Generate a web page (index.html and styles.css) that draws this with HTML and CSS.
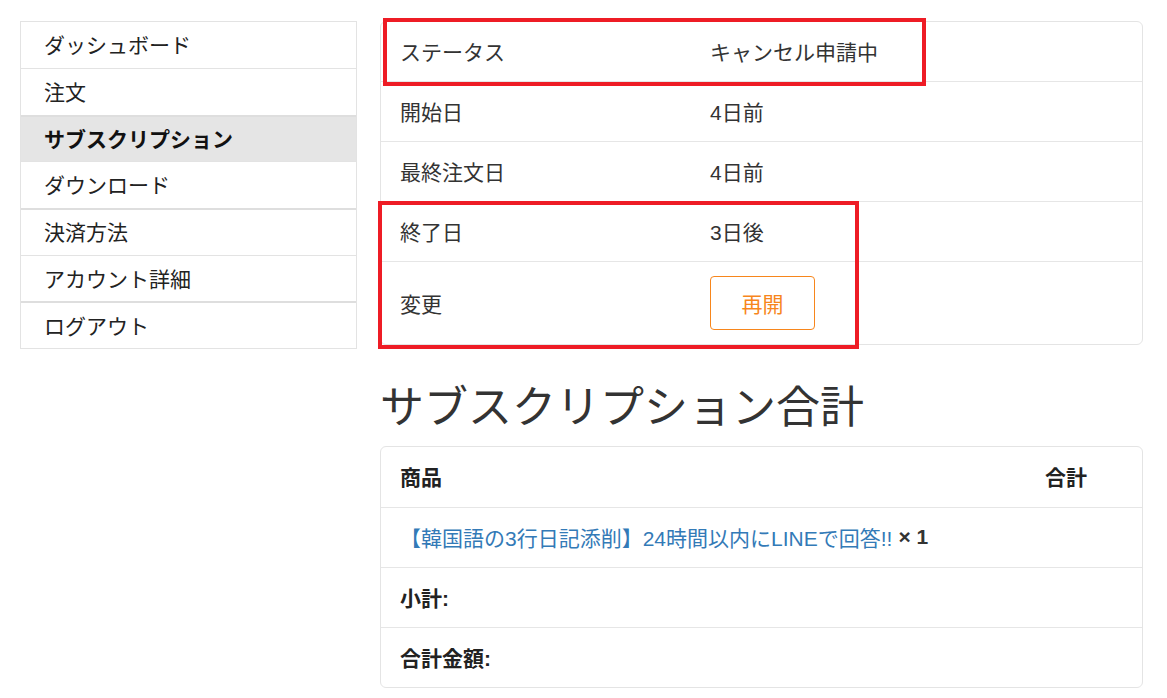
FILE: index.html
```html
<!DOCTYPE html>
<html lang="ja">
<head>
<meta charset="utf-8">
<title>サブスクリプション</title>
<link rel="stylesheet" href="styles.css">
</head>
<body>
<div class="page">
  <nav class="side">
    <a class="nav-item" href="#">ダッシュボード</a>
    <a class="nav-item" href="#">注文</a>
    <a class="nav-item thick active" href="#">サブスクリプション</a>
    <a class="nav-item" href="#">ダウンロード</a>
    <a class="nav-item thick" href="#">決済方法</a>
    <a class="nav-item" href="#">アカウント詳細</a>
    <a class="nav-item thick" href="#">ログアウト</a>
  </nav>
  <main class="main">
    <div class="panel info">
      <div class="row"><div class="cell">ステータス</div><div class="cell">キャンセル申請中</div></div>
      <div class="row"><div class="cell">開始日</div><div class="cell">4日前</div></div>
      <div class="row"><div class="cell">最終注文日</div><div class="cell">4日前</div></div>
      <div class="row"><div class="cell">終了日</div><div class="cell">3日後</div></div>
      <div class="row tall"><div class="cell">変更</div><div class="cell"><a class="btn" href="#">再開</a></div></div>
      <div class="mark mark-status"></div>
      <div class="mark mark-end"></div>
    </div>
    <h2 class="title">サブスクリプション合計</h2>
    <div class="panel totals">
      <div class="row head"><div class="cell">商品</div><div class="cell">合計</div></div>
      <div class="row"><div class="cell"><a class="link" href="#">【韓国語の3行日記添削】24時間以内にLINEで回答!!</a> <strong class="qty">× 1</strong></div><div class="cell"></div></div>
      <div class="row head"><div class="cell">小計:</div><div class="cell"></div></div>
      <div class="row head"><div class="cell">合計金額:</div><div class="cell"></div></div>
    </div>
  </main>
</div>
</body>
</html>
```

FILE: styles.css
```css
* { box-sizing: border-box; }
html, body { margin: 0; padding: 0; background: #fff; }
body {
  font-family: "Liberation Sans", "Noto Sans CJK JP", sans-serif;
  font-size: 21px;
  color: #333;
}
.page {
  display: flex;
  align-items: flex-start;
  gap: 23px;
  padding: 21px 24px 0 20px;
}
.side {
  width: 337px;
  flex: none;
  display: flex;
  flex-direction: column;
  border: 1px solid #e3e3e3;
}
.nav-item {
  display: flex;
  align-items: center;
  height: 46.7px;
  padding: 0 23px 2px;
  color: #222;
  text-decoration: none;
  border-top: 1px solid #e3e3e3;
}
.nav-item:first-child { border-top: none; height: 46px; }
.nav-item.thick { border-top: 2px solid #dedede; }
.nav-item.active {
  background: #e5e5e5;
  font-weight: bold;
  color: #111;
}
.main {
  flex: 1;
  min-width: 0;
}
.panel {
  position: relative;
  border: 1px solid #e4e4e4;
  border-radius: 6px;
}
.row {
  display: grid;
  grid-template-columns: 310px 1fr;
  height: 60px;
  border-top: 1px solid #e6e6e6;
}
.row:first-child { border-top: none; height: 59px; }
.cell {
  display: flex;
  align-items: center;
  padding: 0 19px 2px;
  white-space: nowrap;
}
.row.tall { height: 83px; }
.row.tall .cell { padding-bottom: 0; }
.btn {
  display: flex;
  align-items: center;
  justify-content: center;
  width: 105px;
  height: 54px;
  border: 1px solid #f7861c;
  border-radius: 4px;
  color: #f7861c;
  text-decoration: none;
}
.mark {
  position: absolute;
  border: 4px solid #ee1c25;
  pointer-events: none;
}
.mark-status { left: 2px; top: -4px; width: 543px; height: 68px; }
.mark-end { left: -3px; top: 179px; width: 481px; height: 148px; }
.title {
  margin: 31px 0 13px;
  font-family: "Noto Sans CJK JP", sans-serif;
  font-size: 44px;
  font-weight: 400;
  line-height: 57px;
  color: #333;
}
.totals .row { grid-template-columns: 1fr 116px; }
.totals .row:first-child { height: 60px; }
.totals .row.head .cell { font-weight: bold; color: #222; }
.link { color: #337ab7; text-decoration: none; }
.qty { font-weight: bold; color: #333; margin-left: 6px; }
```
